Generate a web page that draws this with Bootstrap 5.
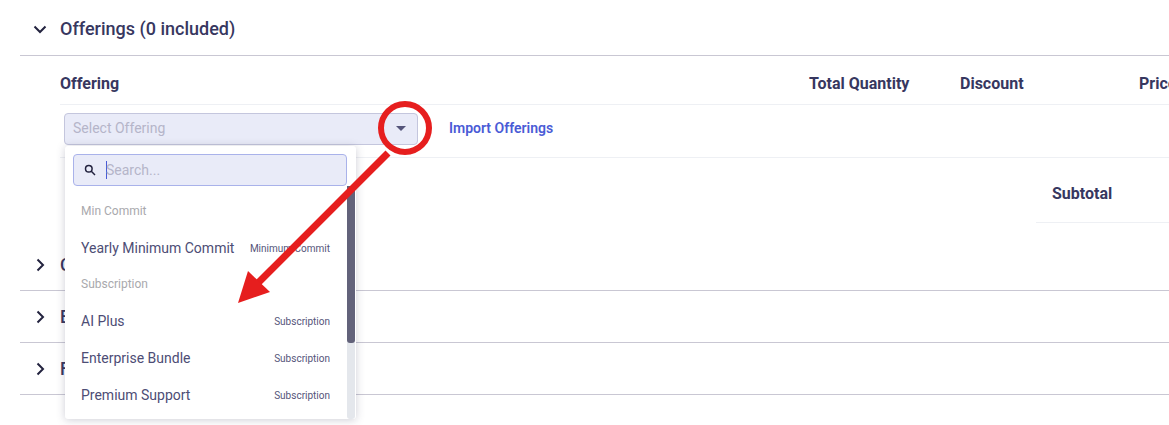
<!DOCTYPE html>
<html lang="en">
<head>
  <meta charset="UTF-8" />
  <meta name="viewport" content="width=device-width, initial-scale=1" />
  <title>Offerings</title>
  <link href="https://cdn.jsdelivr.net/npm/bootstrap@5.3.0/dist/css/bootstrap.min.css" rel="stylesheet" />
  <style>
    html, body { height: 425px; overflow: hidden; }
    body { font-family: Roboto, sans-serif; color: #37375f; background: #fff; position: relative; }
    .page-wrap { width: 1400px; margin-left: 20px; }
    .section-head { height: 52px; border-bottom: 1px solid #c9c7d3; font-size: 18px; font-weight: 500; color: #37375f; padding-left: 12px; }
    .section-head.first { height: 56px; padding-top: 2px; }
    .section-head svg { width: 16px; height: 16px; margin-right: 12px; flex: none; }
    .section-body { padding-left: 40px; height: 183px; }
    .off-table { width: 1340px; table-layout: fixed; margin: 0; }
    .off-table th, .off-table td { border-bottom: 1px solid #eef0f4; padding: 0; font-size: 16px; font-weight: 700; color: #37375f; }
    .off-table th { height: 48px; vertical-align: middle; padding-top: 9px; }
    .off-table td { height: 53px; vertical-align: top; padding-top: 8px; }
    .select-wrap { position: relative; width: 354px; margin-left: 4px; }
    .select-box { height: 32px; background: #e9ebf8; border: 1px solid #c4c6dd; border-radius: 4px; padding: 0 8px 1px; font-size: 14px; font-weight: 400; color: #b5b5c9; }
    .caret-down { width: 0; height: 0; border-left: 5px solid transparent; border-right: 5px solid transparent; border-top: 5px solid #55557a; margin-right: 3px; }
    .import-link { font-size: 14px; font-weight: 600; color: #4a5bd6; text-decoration: none; margin-left: 31px; }
    .off-menu { display: block; top: 33px; left: 1px; width: 291px; height: 273px; padding: 0; border: 0; border-radius: 3px; box-shadow: 0 1px 8px rgba(60, 60, 90, .25); overflow: hidden; z-index: 5; }
    .search-box { height: 32px; margin: 8px 8px 8px; width: 274px; background: #e9ebf8; border: 1px solid #a9b2ea; border-radius: 4px; padding: 1px 0 0 10px; font-size: 14px; font-weight: 400; color: #b5b5c9; }
    .search-box svg { width: 12px; height: 12px; margin-right: 10px; }
    .text-cursor { width: 1px; height: 18px; background: #4a5bd6; margin-right: -1px; }
    .opt-row { height: 37px; padding: 0 26px 0 16px; font-size: 14px; font-weight: 400; color: #4d4d75; }
    .opt-label { height: 36px; padding-bottom: 2px; font-size: 12px; color: #a9a9ad; }
    .opt-tag { font-size: 10px; color: #55557a; }
    .fake-track { position: absolute; top: 40px; right: 1px; width: 8px; bottom: 0; background: #e4e7ec; border-radius: 0 0 3px 3px; }
    .fake-thumb { height: 157px; background: #62627a; border-radius: 0 0 3px 3px; }
    .subtotal-box { width: 384px; height: 65px; margin-left: auto; border-bottom: 1px solid #eef0f4; padding: 8px 0 0 16px; font-size: 16px; font-weight: 700; }
    .callout { position: absolute; left: 0; top: 0; z-index: 10; pointer-events: none; }
  </style>
</head>
<body>
  <div class="page-wrap">
    <div class="section-head first d-flex align-items-center">
      <svg viewBox="0 0 16 16" fill="none" stroke="#23233f" stroke-width="2"><path d="M2.5 5.5 8 11l5.500-5.500" /></svg>
      <span>Offerings (0 included)</span>
    </div>

    <div class="section-body">
      <table class="off-table">
        <colgroup>
          <col style="width: 749px" />
          <col style="width: 151px" />
          <col style="width: 179px" />
          <col />
        </colgroup>
        <thead>
          <tr><th>Offering</th><th>Total Quantity</th><th>Discount</th><th>Price</th></tr>
        </thead>
        <tbody>
          <tr>
            <td colspan="4">
              <div class="d-flex align-items-center">
                <div class="select-wrap">
                  <div class="select-box d-flex align-items-center justify-content-between">
                    <span>Select Offering</span>
                    <span class="caret-down"></span>
                  </div>
                  <div class="dropdown-menu off-menu">
                    <div class="search-box d-flex align-items-center">
                      <svg viewBox="0 0 12 12" fill="none" stroke="#23233f" stroke-width="1.500"><circle cx="4.800" cy="4.800" r="3.300" /><path d="M7.300 7.300 11 11" /></svg>
                      <span class="text-cursor"></span>
                      <span>Search...</span>
                    </div>
                    <div class="opt-row opt-label d-flex align-items-center">Min Commit</div>
                    <div class="opt-row d-flex align-items-center justify-content-between"><span>Yearly Minimum Commit</span><span class="opt-tag">Minimum Commit</span></div>
                    <div class="opt-row opt-label d-flex align-items-center">Subscription</div>
                    <div class="opt-row d-flex align-items-center justify-content-between"><span>AI Plus</span><span class="opt-tag">Subscription</span></div>
                    <div class="opt-row d-flex align-items-center justify-content-between"><span>Enterprise Bundle</span><span class="opt-tag">Subscription</span></div>
                    <div class="opt-row d-flex align-items-center justify-content-between"><span>Premium Support</span><span class="opt-tag">Subscription</span></div>
                    <div class="fake-track"><div class="fake-thumb"></div></div>
                  </div>
                </div>
                <a href="#" class="import-link">Import Offerings</a>
              </div>
            </td>
          </tr>
        </tbody>
      </table>
      <div class="subtotal-box d-flex align-items-center">Subtotal</div>
    </div>

    <div class="section-head d-flex align-items-center">
      <svg viewBox="0 0 16 16" fill="none" stroke="#23233f" stroke-width="2"><path d="M5.500 2.500 11 8l-5.500 5.500" /></svg>
      <span>Credits</span>
    </div>
    <div class="section-head d-flex align-items-center">
      <svg viewBox="0 0 16 16" fill="none" stroke="#23233f" stroke-width="2"><path d="M5.500 2.500 11 8l-5.500 5.500" /></svg>
      <span>Entitlements</span>
    </div>
    <div class="section-head d-flex align-items-center">
      <svg viewBox="0 0 16 16" fill="none" stroke="#23233f" stroke-width="2"><path d="M5.500 2.500 11 8l-5.500 5.500" /></svg>
      <span>Fees</span>
    </div>
  </div>

  <svg class="callout" width="1169" height="425" viewBox="0 0 1169 425" fill="none">
    <circle cx="405" cy="128" r="24" stroke="#e61e1e" stroke-width="6" />
    <path d="M388 153 258 283" stroke="#e61e1e" stroke-width="7" />
    <path d="M238 303 248 271 270 292Z" fill="#e61e1e" />
  </svg>
</body>
</html>
